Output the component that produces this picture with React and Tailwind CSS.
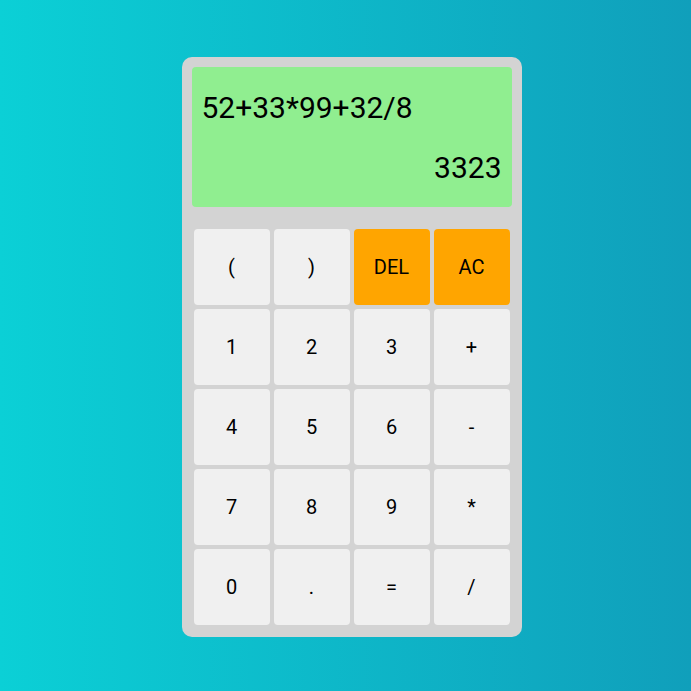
import React, { useState } from 'react';

const KEYS = ['(', ')', 'DEL', 'AC', '1', '2', '3', '+', '4', '5', '6', '-', '7', '8', '9', '*', '0', '.', '=', '/'];

const App = () => {
  const [expr, setExpr] = useState('52+33*99+32/8');
  const [result, setResult] = useState('3323');

  const press = (k) => {
    if (k === 'AC') {
      setExpr('');
      setResult('');
    } else if (k === 'DEL') {
      setExpr(expr.slice(0, -1));
    } else if (k === '=') {
      try {
        // eslint-disable-next-line no-new-func
        setResult(String(Function('return (' + expr + ')')()));
      } catch (e) {
        setResult('Error');
      }
    } else {
      setExpr(expr + k);
    }
  };

  return (
    <div
      className="w-full h-screen flex items-center justify-center bg-gradient-to-r from-[#0bd0d6] to-[#109fbb]"
      style={{ fontFamily: 'Roboto, "Noto Sans", sans-serif' }}
    >
      <div className="w-[340px] bg-[#d3d3d3] rounded-[10px] p-[10px] mt-[3px] ml-[12px]">
        <div className="h-[140px] bg-[#90ee90] rounded-[4px] px-[10px] pt-[23px] pb-[22px] flex flex-col justify-between text-[30px] text-black">
          <div className="leading-[35px] h-[35px] whitespace-nowrap overflow-hidden">{expr}</div>
          <div className="leading-[35px] h-[35px] text-right">{result}</div>
        </div>
        <div className="mt-[20px] p-[2px] grid grid-cols-4 gap-1">
          {KEYS.map((k) => (
            <button
              key={k}
              onClick={() => press(k)}
              className={
                'h-[76px] rounded-[4px] text-[20px] text-black flex items-center justify-center ' +
                (k === 'DEL' || k === 'AC' ? 'bg-[#ffa500]' : 'bg-[#f0f0f0]')
              }
            >
              {k}
            </button>
          ))}
        </div>
      </div>
    </div>
  );
};

export default App;
